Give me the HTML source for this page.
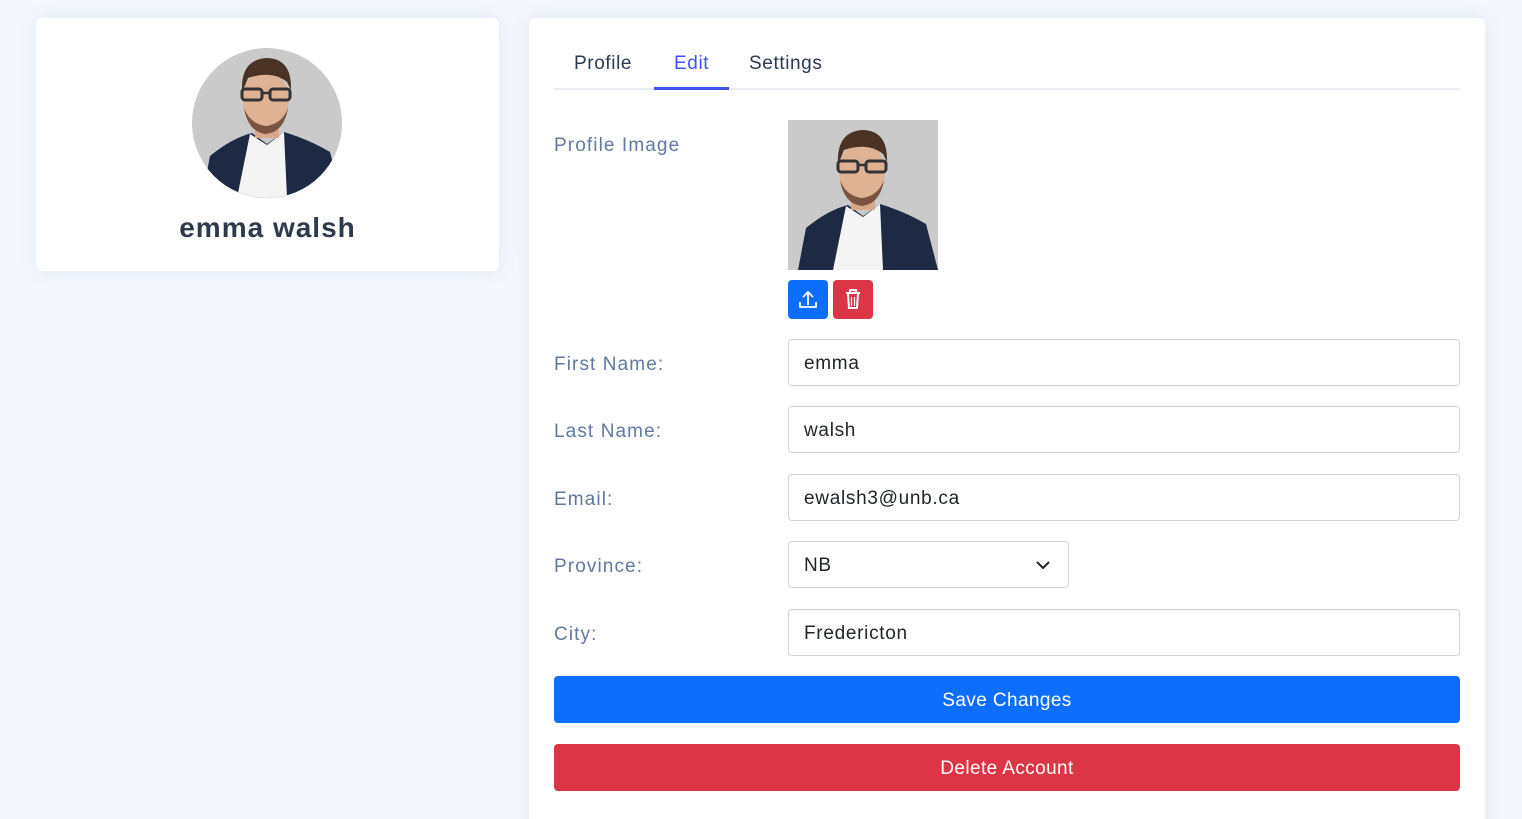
<!DOCTYPE html>
<html><head><meta charset="utf-8"><style>
*{box-sizing:border-box;margin:0;padding:0}
html,body{width:1522px;height:819px;overflow:hidden}
body{background:#f4f7fd;font-family:"Liberation Sans",sans-serif;position:relative}
.card{position:absolute;background:#fff;border-radius:6px;box-shadow:0 0 20px rgba(1,41,112,0.08)}
.lab{position:absolute;left:554px;font-size:19px;color:#6178a0;letter-spacing:1.1px}
.inp{position:absolute;left:788px;width:672px;height:47px;border:1px solid #ced4da;border-radius:4px;background:#fff;font-size:19px;color:#212529;padding:13px 15px 0;letter-spacing:0.7px}
.btn{position:absolute;left:554px;width:906px;height:47px;border-radius:4px;color:#fff;font-size:19px;text-align:center;line-height:49px;letter-spacing:0.4px}
.tab{position:absolute;top:53px;font-size:19px;color:#2a3a4f;letter-spacing:0.6px}
</style></head><body>
<svg width="0" height="0" style="position:absolute"><defs>
<g id="man">
<rect width="150" height="150" fill="#cacaca"/>
<path d="M10 150 L18 108 Q40 90 60 85 L75 96 L92 84 Q118 92 138 104 L150 150Z" fill="#1e2a44"/>
<path d="M58 86 L75 97 L92 84 L95 150 L45 150Z" fill="#f4f4f4"/>
<rect x="63" y="68" width="24" height="22" fill="#d9a88a"/>
<ellipse cx="74" cy="52" rx="23" ry="30" fill="#e0b294"/>
<path d="M50 45 Q48 12 74 10 Q100 10 99 42 L95 34 Q80 22 56 30Z" fill="#4a3325"/>
<path d="M52 60 Q56 84 74 86 Q92 84 96 60 Q90 76 74 78 Q58 76 52 60Z" fill="#7a5440"/>
<rect x="50" y="41" width="20" height="11" rx="3" fill="none" stroke="#333" stroke-width="3"/>
<rect x="78" y="41" width="20" height="11" rx="3" fill="none" stroke="#333" stroke-width="3"/>
<path d="M70 45 L78 45" stroke="#333" stroke-width="2.5"/>
</g></defs></svg>

<div class="card" style="left:36px;top:18px;width:463px;height:253px">
<svg style="position:absolute;left:156px;top:30px" width="150" height="150"><clipPath id="c"><circle cx="75" cy="75" r="75"/></clipPath><use href="#man" clip-path="url(#c)"/></svg>
<div style="position:absolute;top:194px;width:100%;text-align:center;font-size:28px;font-weight:bold;color:#2d3a4b;letter-spacing:1px">emma walsh</div>
</div>

<div class="card" style="left:529px;top:18px;width:956px;height:820px"></div>
<div class="tab" style="left:574px">Profile</div>
<div class="tab" style="left:674px;color:#4154f1">Edit</div>
<div class="tab" style="left:749px">Settings</div>
<div style="position:absolute;left:554px;top:88px;width:906px;height:2px;background:#eceef6"></div>
<div style="position:absolute;left:654px;top:87px;width:75px;height:3px;background:#4154f1"></div>

<div class="lab" style="top:135px">Profile Image</div>
<svg style="position:absolute;left:788px;top:120px" width="150" height="150"><use href="#man"/></svg>
<div style="position:absolute;left:788px;top:280px;width:40px;height:39px;background:#0d6efd;border-radius:4px">
<svg width="40" height="39"><path d="M20 25 V12 M15 17 L20 12 L25 17 M12 22 V27 H28 V22" fill="none" stroke="#fff" stroke-width="1.8"/></svg></div>
<div style="position:absolute;left:833px;top:280px;width:40px;height:39px;background:#dc3545;border-radius:4px">
<svg width="40" height="39"><path d="M13 13 H27 M17 13 V10 H23 V13 M15 14 L16 28 H24 L25 14" fill="none" stroke="#fff" stroke-width="2"/><path d="M18.5 17V26M21.5 17V26" stroke="#fff" stroke-width="1.2"/></svg></div>

<div class="lab" style="top:354px">First Name:</div>
<div class="inp" style="top:339px">emma</div>
<div class="lab" style="top:421px">Last Name:</div>
<div class="inp" style="top:406px">walsh</div>
<div class="lab" style="top:489px">Email:</div>
<div class="inp" style="top:474px">ewalsh3@unb.ca</div>
<div class="lab" style="top:556px">Province:</div>
<div class="inp" style="top:541px;width:281px">NB
<svg style="position:absolute;right:18px;top:18px" width="14" height="10"><path d="M1 2 L7 8 L13 2" fill="none" stroke="#212529" stroke-width="2"/></svg></div>
<div class="lab" style="top:624px">City:</div>
<div class="inp" style="top:609px">Fredericton</div>
<div class="btn" style="top:676px;background:#0d6efd">Save Changes</div>
<div class="btn" style="top:744px;background:#dc3545">Delete Account</div>
</body></html>
